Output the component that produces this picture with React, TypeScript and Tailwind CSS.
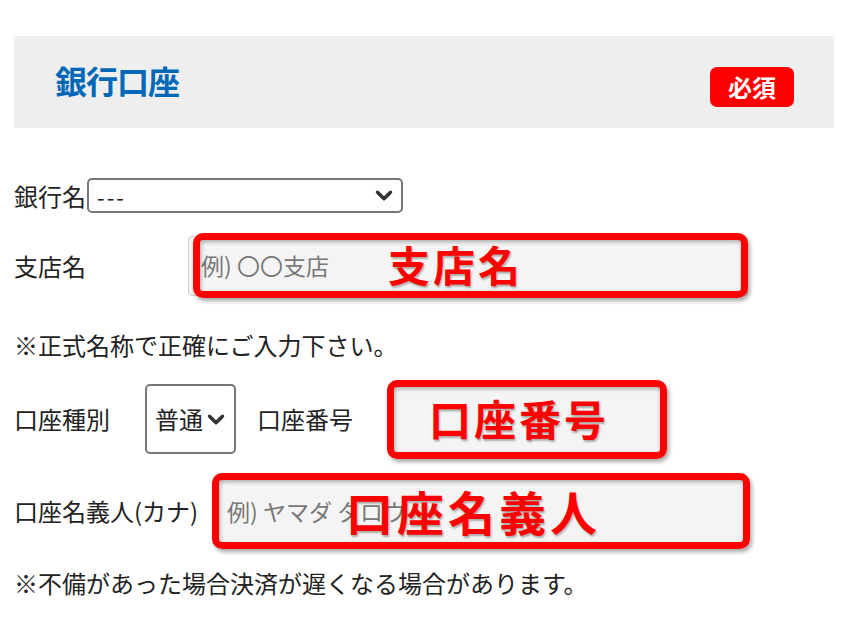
import React from "react";

const Chevron = ({ className = "" }: { className?: string }) => (
  <svg viewBox="0 0 16 12" className={className} fill="none">
    <path d="M2 3 L8 9 L14 3" stroke="#333" strokeWidth="3.2" strokeLinecap="round" strokeLinejoin="round" />
  </svg>
);

const Frame = ({ className = "" }: { className?: string }) => (
  <div
    className={
      "absolute border-[7px] border-[#ff0000] rounded-[10px] shadow-[2px_3px_4px_rgba(0,0,0,0.35),inset_1px_2px_4px_rgba(0,0,0,0.3)] pointer-events-none " +
      className
    }
  />
);

export default function App() {
  return (
    <div
      className="w-[850px] h-[620px] bg-white pt-[36px] pl-[14px] pr-[16px] text-[#222] overflow-hidden"
      style={{ fontFamily: '"Noto Sans CJK JP", "Noto Sans", sans-serif' }}
    >
      <div className="h-[92px] bg-[#eeeeee] flex items-center justify-between pl-[41px] pr-[40px]">
        <div className="text-[32px] font-bold text-[#0068b7] leading-none tracking-[-1px] -mt-[4px]">銀行口座</div>
        <div className="w-[84px] h-[40px] mt-[10px] rounded-[7px] bg-[#ff0000] text-white font-bold text-[24px] flex items-center justify-center leading-none">
          必須
        </div>
      </div>

      {/* 銀行名 */}
      <div className="mt-[50px] h-[35px] flex items-center text-[24px]">
        <span className="w-[73px] leading-none">銀行名</span>
        <div className="w-[316px] h-[35px] border-2 border-[#777] rounded-[5px] flex items-center justify-between pl-[8px] pr-[8px]">
          <span className="text-[22px] tracking-[2px] leading-none">---</span>
          <Chevron className="w-[18px] h-[13px]" />
        </div>
      </div>

      {/* 支店名 */}
      <div className="relative mt-[20px] h-[65px] flex items-center text-[24px]">
        <span className="w-[174px] leading-none">支店名</span>
        <div className="w-[560px] h-[60px] border border-[#ccc] rounded-[4px] bg-[#f4f4f4] flex items-center pl-[12px] text-[#777] text-[23px]">
          例) 〇〇支店
        </div>
        <Frame className="left-[179px] top-0 w-[555px] h-[65px]" />
        <div className="absolute left-[374px] top-[5px] text-[#ff0000] font-bold text-[42px] tracking-[3px] leading-[52px] [text-shadow:1px_2px_2px_rgba(0,0,0,0.3)]">
          支店名
        </div>
      </div>

      <div className="mt-[31px] h-[32px] flex items-center text-[24px]">※正式名称で正確にご入力下さい。</div>

      {/* 口座種別 / 口座番号 */}
      <div className="mt-[23px] h-[70px] flex items-center text-[24px]">
        <span className="w-[131px] leading-none">口座種別</span>
        <div className="w-[91px] h-[70px] border-2 border-[#777] rounded-[5px] flex items-center pl-[8px] gap-[4px]">
          <span className="leading-none">普通</span>
          <Chevron className="w-[18px] h-[13px]" />
        </div>
        <span className="ml-[21px] leading-none">口座番号</span>
        <div className="relative ml-[34px] w-[280px] h-[79px] bg-[#f4f4f4] rounded-[10px]">
          <Frame className="inset-0" />
          <div className="absolute left-[42px] top-[10px] text-[#ff0000] font-bold text-[42px] tracking-[3px] leading-[56px] [text-shadow:1px_2px_2px_rgba(0,0,0,0.3)]">
            口座番号
          </div>
        </div>
      </div>

      {/* 口座名義人 */}
      <div className="mt-[19px] h-[76px] flex items-center text-[24px]">
        <span className="w-[198px] leading-none whitespace-nowrap">口座名義人(カナ)</span>
        <div className="relative w-[538px] h-[76px] bg-[#f4f4f4] rounded-[10px]">
          <div className="absolute left-[15px] top-0 h-[76px] flex items-center text-[#777] text-[23px] whitespace-nowrap">例) ヤマダ タロウ</div>
          <Frame className="inset-0" />
          <div className="absolute left-[134px] top-[8px] text-[#ff0000] font-bold text-[47px] tracking-[4px] leading-[60px] [text-shadow:1px_2px_2px_rgba(0,0,0,0.3)]">
            口座名義人
          </div>
        </div>
      </div>

      <div className="mt-[18px] h-[32px] flex items-center text-[24px]">※不備があった場合決済が遅くなる場合があります。</div>
    </div>
  );
}
